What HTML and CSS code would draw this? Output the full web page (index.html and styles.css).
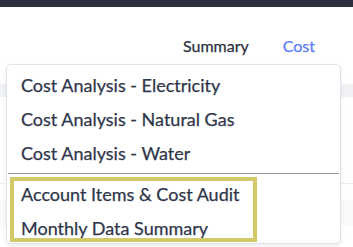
FILE: index.html
```html
<!DOCTYPE html>
<html>
<head>
<meta charset="utf-8">
<link rel="stylesheet" href="styles.css">
</head>
<body>
<div class="topbar"></div>
<nav class="nav">
  <a class="nav-link">Summary</a>
  <a class="nav-link active">Cost</a>
</nav>
<div class="content">
  <div class="band"></div>
  <div class="band-line"></div>
  <div class="band2"></div>
</div>
<div class="menu">
  <div class="item">Cost Analysis - Electricity</div>
  <div class="item">Cost Analysis - Natural Gas</div>
  <div class="item">Cost Analysis - Water</div>
  <div class="divider"></div>
  <div class="item">Account Items &amp; Cost Audit</div>
  <div class="item">Monthly Data Summary</div>
  <div class="highlight"></div>
</div>
</body>
</html>
```
FILE: styles.css
```css
html, body {
  margin: 0;
  padding: 0;
  background: #ffffff;
  font-family: Lato, "Open Sans", sans-serif;
  overflow: hidden;
}
.topbar {
  height: 7px;
  background: #2f303d;
}
.nav {
  height: 57px;
  display: flex;
  justify-content: flex-end;
  align-items: center;
  gap: 34px;
  padding-right: 38px;
  box-sizing: border-box;
  padding-top: 20px;
}
.nav-link {
  font-size: 16px;
  color: #2c303c;
  -webkit-text-stroke: 0.25px currentColor;
}
.nav-link.active {
  color: #5a7cf6;
}
.content {
  display: flex;
  flex-direction: column;
}
.band {
  margin-top: 20px;
  height: 13px;
  background: #f1f2f5;
}
.band-line {
  margin-top: 86px;
  height: 1px;
  background: #eceef2;
}
.band2 {
  margin-top: 16px;
  height: 26px;
  background: #fafafb;
}
.menu {
  position: absolute;
  left: 6px;
  top: 64px;
  width: 335px;
  height: 180px;
  box-sizing: border-box;
  background: #ffffff;
  border: 1px solid #dde4ee;
  border-radius: 5px;
  box-shadow: 0 2px 4px rgba(0, 0, 0, 0.08);
  padding-top: 3px;
}
.item {
  height: 34px;
  line-height: 34px;
  padding-left: 14px;
  font-size: 18px;
  color: #2f364a;
  white-space: nowrap;
  -webkit-text-stroke: 0.25px currentColor;
}
.divider {
  height: 1px;
  margin: 3px 1px 3px 1px;
  background: #9a9a9a;
}
.highlight {
  position: absolute;
  left: 3px;
  top: 112px;
  width: 247px;
  height: 65px;
  box-sizing: border-box;
  border: 4px solid #d2ca69;
}
```
